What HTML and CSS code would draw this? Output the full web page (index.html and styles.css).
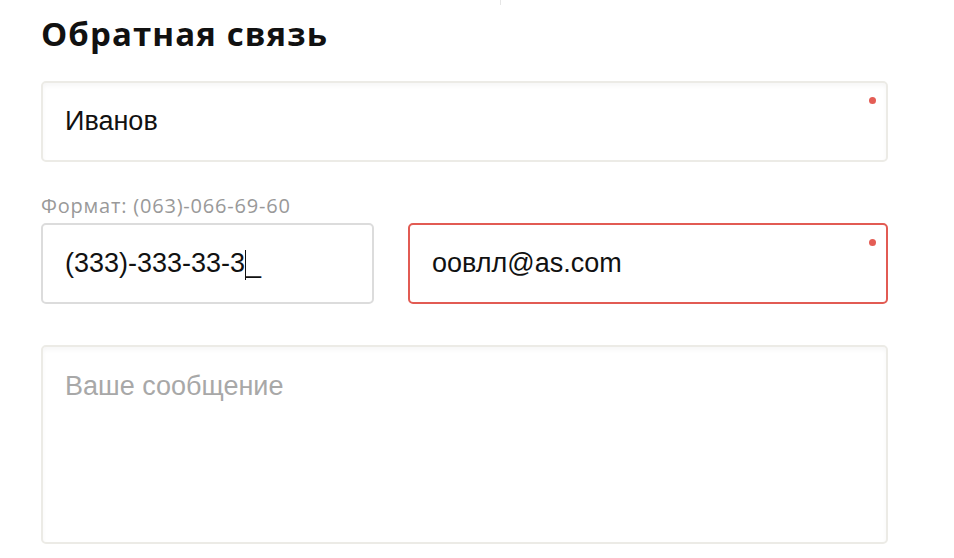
FILE: index.html
```html
<!DOCTYPE html>
<html lang="ru">
<head>
  <meta charset="UTF-8">
  <title>Обратная связь</title>
  <link rel="stylesheet" href="styles.css">
</head>
<body>
  <div class="top-divider"></div>
  <form class="feedback">
    <h1 class="feedback-title">Обратная связь</h1>

    <div class="field required">
      <span class="field-value">Иванов</span>
    </div>

    <div class="hint">Формат: (063)-066-69-60</div>
    <div class="row">
      <div class="field focused">
        <span class="field-value">(333)-333-33-3</span><span class="caret"></span><span class="field-value">_</span>
      </div>
      <div class="field required invalid">
        <span class="field-value">оовлл@as.com</span>
      </div>
    </div>

    <div class="field message">
      <span class="placeholder">Ваше сообщение</span>
    </div>
  </form>
</body>
</html>
```

FILE: styles.css
```css
body {
  margin: 0;
  background: #fff;
  color: #111;
  font-family: 'Liberation Sans', Arial, sans-serif;
  position: relative;
}
.top-divider {
  position: absolute;
  top: 0;
  left: 500px;
  width: 1px;
  height: 5px;
  background: #e6e6e6;
}
.feedback {
  width: 847px;
  padding-left: 41px;
}
.feedback-title {
  font-family: 'Open Sans', sans-serif;
  font-weight: 700;
  font-size: 33px;
  line-height: 38px;
  letter-spacing: 1.1px;
  margin: 15px 0 28px;
  color: #111;
}
.field {
  position: relative;
  box-sizing: border-box;
  height: 81px;
  display: flex;
  align-items: center;
  padding: 0 22px;
  border: 2px solid #ecebe6;
  border-radius: 5px;
  background: #fff;
  box-shadow: inset 0 3px 4px rgba(0, 0, 0, 0.035);
  font-size: 27px;
}
.field.required::after {
  content: "";
  position: absolute;
  top: 14px;
  right: 10px;
  width: 7px;
  height: 7px;
  border-radius: 50%;
  background: #e45d55;
}
.field.focused {
  border-color: #dcdcdc;
  box-shadow: none;
}
.field.invalid {
  border-color: #e25b53;
  box-shadow: none;
}
.caret {
  display: inline-block;
  width: 1px;
  height: 30px;
  background: #111;
  margin-top: 2px;
}
.hint {
  font-family: 'Open Sans', sans-serif;
  font-size: 20px;
  line-height: 24px;
  letter-spacing: 0.8px;
  color: #999;
  margin: 32px 0 5px;
}
.row {
  display: grid;
  grid-template-columns: 333px 1fr;
  gap: 34px;
}
.field.message {
  margin-top: 41px;
  height: 199px;
  align-items: flex-start;
  padding-top: 24px;
}
.placeholder {
  color: #a8a8a8;
}
```
